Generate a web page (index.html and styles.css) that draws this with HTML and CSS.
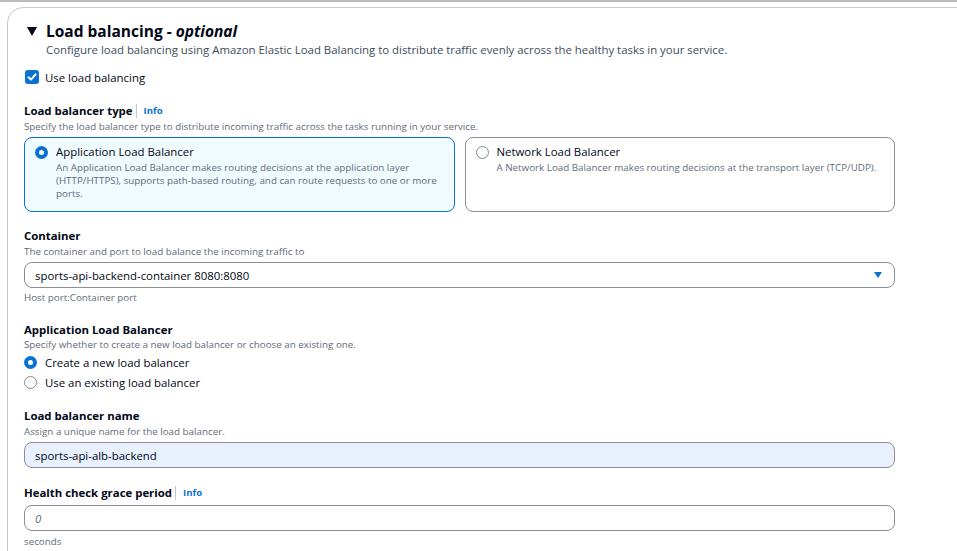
FILE: index.html
```html
<!DOCTYPE html>
<html lang="en">
<head>
<meta charset="utf-8">
<title>Load balancing</title>
<link rel="stylesheet" href="styles.css">
</head>
<body>
<div class="viewport">
<div class="topline"></div>
<section class="panel">
  <header class="panel-head">
    <h2 class="panel-title"><span class="caret"></span>Load balancing - <i>optional</i></h2>
    <p class="panel-desc">Configure load balancing using Amazon Elastic Load Balancing to distribute traffic evenly across the healthy tasks in your service.</p>
  </header>

  <label class="check-row">
    <span class="checkbox"><svg viewBox="0 0 14 14" width="14" height="14"><path d="M3.5 7.2 L6 9.6 L10.6 4.4" fill="none" stroke="#fff" stroke-width="2" stroke-linecap="round" stroke-linejoin="round"/></svg></span>
    <span>Use load balancing</span>
  </label>

  <div class="field field-type">
    <div class="label">Load balancer type <span class="sep"></span><a class="info">Info</a></div>
    <div class="hint">Specify the load balancer type to distribute incoming traffic across the tasks running in your service.</div>
    <div class="tiles">
      <div class="tile tile-on">
        <span class="radio radio-on"></span>
        <div class="tile-body">
          <div class="tile-title">Application Load Balancer</div>
          <div class="tile-desc">An Application Load Balancer makes routing decisions at the application layer (HTTP/HTTPS), supports path-based routing, and can route requests to one or more ports.</div>
        </div>
      </div>
      <div class="tile">
        <span class="radio"></span>
        <div class="tile-body">
          <div class="tile-title">Network Load Balancer</div>
          <div class="tile-desc">A Network Load Balancer makes routing decisions at the transport layer (TCP/UDP).</div>
        </div>
      </div>
    </div>
  </div>

  <div class="field">
    <div class="label">Container</div>
    <div class="hint">The container and port to load balance the incoming traffic to</div>
    <div class="input select"><span>sports-api-backend-container 8080:8080</span><span class="select-caret"></span></div>
    <div class="hint hint-after">Host port:Container port</div>
  </div>

  <div class="field field-alb">
    <div class="label">Application Load Balancer</div>
    <div class="hint hint-tight">Specify whether to create a new load balancer or choose an existing one.</div>
    <div class="radio-row"><span class="radio radio-on"></span><span>Create a new load balancer</span></div>
    <div class="radio-row"><span class="radio"></span><span>Use an existing load balancer</span></div>
  </div>

  <div class="field field-name">
    <div class="label">Load balancer name</div>
    <div class="hint">Assign a unique name for the load balancer.</div>
    <div class="input filled">sports-api-alb-backend</div>
  </div>

  <div class="field field-health">
    <div class="label">Health check grace period <span class="sep"></span><a class="info">Info</a></div>
    <div class="input input-gap"><span class="placeholder">0</span></div>
    <div class="hint hint-after2">seconds</div>
  </div>
</section>
</div>
</body>
</html>
```
FILE: styles.css
```css
html, body {
  margin: 0;
  padding: 0;
  background: #ffffff;
}
body {
  font-family: "Open Sans", "Noto Sans", sans-serif;
  color: #000716;
  font-size: 11.4px;
}
.viewport {
  height: 100vh;
  overflow: hidden;
}
.topline {
  height: 2px;
  background: #bcbcc0;
}
.panel {
  margin: 5px 0 0 7px;
  width: calc(100% + 40px);
  min-height: 600px;
  border: 1px solid #c6c6cd;
  border-radius: 16px;
  padding: 13px 0 0 16px;
  box-sizing: border-box;
}
.panel-title {
  margin: 0;
  display: flex;
  align-items: center;
  font-size: 15.5px;
  line-height: 20px;
  font-weight: 700;
  white-space: pre;
}
.panel-title i { font-style: italic; }
.caret {
  width: 0;
  height: 0;
  border-left: 5.5px solid transparent;
  border-right: 5.5px solid transparent;
  border-top: 9px solid #000716;
  margin: 0 9px 0 3px;
}
.panel-desc {
  margin: 1px 0 0 22px;
  line-height: 16px;
  color: #414d5c;
}
.check-row {
  display: flex;
  align-items: center;
  gap: 6px;
  margin-top: 9px;
  height: 20px;
  color: #000716;
}
.checkbox {
  width: 14px;
  height: 14px;
  border-radius: 3px;
  background: #0972d3;
  display: flex;
  align-items: center;
  justify-content: center;
  margin-left: 1px;
}
.field { margin-top: 16px; width: 871px; }
.field-alb { margin-top: 17px; }
.field-name { margin-top: 16px; }
.field-health { margin-top: 17px; }
.label {
  display: flex;
  align-items: center;
  font-weight: 700;
  line-height: 16px;
  white-space: pre;
}
.sep {
  display: inline-block;
  width: 1px;
  height: 14px;
  background: #c6c6cd;
  margin: 0 7px 0 0;
}
.info {
  color: #0972d3;
  font-size: 9.6px;
  font-weight: 700;
}
.hint {
  margin-top: 1px;
  font-size: 9.8px;
  line-height: 14px;
  color: #5f6b7a;
}
.hint-tight { margin-top: 0; }
.tiles {
  display: flex;
  gap: 10px;
  margin-top: 3px;
}
.tile {
  flex: 1;
  height: 75px;
  box-sizing: border-box;
  border: 1px solid #8c8c94;
  border-radius: 8px;
  display: flex;
  align-items: flex-start;
  gap: 8px;
  padding: 7px 10px 0 10px;
}
.tile-on {
  border-color: #0972d3;
  background: #f0fbff;
}
.tile .radio { margin-top: 1px; }
.tile-body { flex: 1; }
.tile-title {
  line-height: 14px;
  white-space: nowrap;
}
.tile-desc {
  margin-top: 2px;
  font-size: 9.8px;
  line-height: 13px;
  color: #5f6b7a;
}
.radio {
  flex: none;
  width: 13px;
  height: 13px;
  box-sizing: border-box;
  border-radius: 50%;
  border: 1.5px solid #7d8998;
  background: #fff;
}
.radio-on {
  border: 4px solid #0972d3;
}
.input {
  margin-top: 3px;
  height: 26px;
  box-sizing: border-box;
  border: 1px solid #8c8c94;
  border-radius: 8px;
  display: flex;
  align-items: center;
  padding: 0 11px 0 10px;
  background: #fff;
}
.select { justify-content: space-between; }
.select-caret {
  width: 0;
  height: 0;
  border-left: 4px solid transparent;
  border-right: 4px solid transparent;
  border-top: 6px solid #0972d3;
  margin-right: 1px;
}
.filled { background: #e8f0fe; }
.input-gap { margin-top: 4px; }
.placeholder {
  color: #5f6b7a;
  font-style: italic;
}
.hint-after { margin-top: 3px; }
.hint-after2 { margin-top: 4px; }
.radio-row {
  display: flex;
  align-items: center;
  gap: 8px;
  height: 20px;
}
```
